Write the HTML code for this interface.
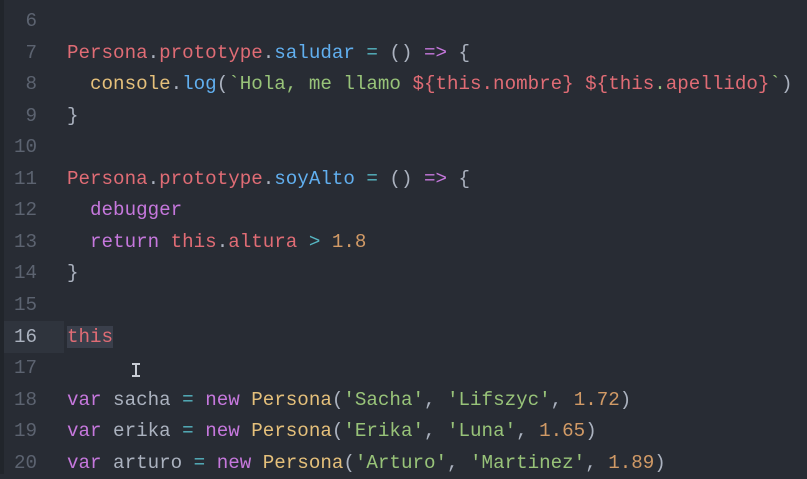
<!DOCTYPE html>
<html><head><meta charset="utf-8"><style>
html,body{margin:0;padding:0;}
body{width:807px;height:474px;overflow:hidden;background:#282c34;position:relative;font-family:"Liberation Mono",monospace;font-size:19.2px;}
.wrap{position:absolute;left:0;top:2px;width:807px;height:474px;}
.edge{position:absolute;left:0;top:0;width:4px;height:474px;background:#21252b;}
.ln{position:absolute;left:0;width:37px;text-align:right;color:#5c6370;height:31.55px;line-height:31.55px;}
.code{position:absolute;left:67px;white-space:pre;color:#abb2bf;height:31.55px;line-height:31.55px;}
.hl{position:absolute;left:4px;width:60px;height:31.55px;background:#2f343d;}
.r{color:#e06c75}.b{color:#61afef}.c{color:#56b6c2}.y{color:#e5c07b}.g{color:#98c379}.m{color:#c678dd}.o{color:#d19a66}.w{color:#abb2bf}
.sel{background:#3a3f4b}
.cur{position:absolute;left:135px;top:361px;width:2px;height:14px;background:#c8ccd4;}
.cur:before,.cur:after{content:"";position:absolute;left:-3px;width:8px;height:2px;background:#c8ccd4;}
.cur:before{top:0}.cur:after{bottom:0}
</style></head><body>
<div class="edge"></div>
<div class="wrap">
<div class="hl" style="top:319px"></div>
<div class="ln" style="top:4px">6</div>
<div class="ln" style="top:35.5px">7</div>
<div class="ln" style="top:67.1px">8</div>
<div class="ln" style="top:98.6px">9</div>
<div class="ln" style="top:130.2px">10</div>
<div class="ln" style="top:161.7px">11</div>
<div class="ln" style="top:193.3px">12</div>
<div class="ln" style="top:224.8px">13</div>
<div class="ln" style="top:256.4px">14</div>
<div class="ln" style="top:287.9px">15</div>
<div class="ln" style="top:319.5px;color:#abb2bf">16</div>
<div class="ln" style="top:351px">17</div>
<div class="ln" style="top:382.6px">18</div>
<div class="ln" style="top:414.1px">19</div>
<div class="ln" style="top:445.7px">20</div>

<div class="code" style="top:35.5px"><span class="r">Persona</span>.<span class="r">prototype</span>.<span class="b">saludar</span> <span class="c">=</span> () <span class="m">=&gt;</span> {</div>
<div class="code" style="top:67.1px">  <span class="y">console</span>.<span class="b">log</span>(<span class="g">`Hola, me llamo </span><span class="r">${this.nombre}</span> <span class="r">${this<span class="g">.</span>apellido}</span><span class="g">`</span>)</div>
<div class="code" style="top:98.6px">}</div>
<div class="code" style="top:161.7px"><span class="r">Persona</span>.<span class="r">prototype</span>.<span class="b">soyAlto</span> <span class="c">=</span> () <span class="m">=&gt;</span> {</div>
<div class="code" style="top:193.3px">  <span class="m">debugger</span></div>
<div class="code" style="top:224.8px">  <span class="m">return</span> <span class="r">this</span>.<span class="r">altura</span> <span class="c">&gt;</span> <span class="o">1.8</span></div>
<div class="code" style="top:256.4px">}</div>
<div class="code" style="top:319.5px"><span class="r sel">this</span></div>
<div class="code" style="top:382.6px"><span class="m">var</span> sacha <span class="c">=</span> <span class="m">new</span> <span class="y">Persona</span>(<span class="g">'Sacha'</span>, <span class="g">'Lifszyc'</span>, <span class="o">1.72</span>)</div>
<div class="code" style="top:414.1px"><span class="m">var</span> erika <span class="c">=</span> <span class="m">new</span> <span class="y">Persona</span>(<span class="g">'Erika'</span>, <span class="g">'Luna'</span>, <span class="o">1.65</span>)</div>
<div class="code" style="top:445.7px"><span class="m">var</span> arturo <span class="c">=</span> <span class="m">new</span> <span class="y">Persona</span>(<span class="g">'Arturo'</span>, <span class="g">'Martinez'</span>, <span class="o">1.89</span>)</div>
<div class="cur"></div>
</div>
</body></html>
